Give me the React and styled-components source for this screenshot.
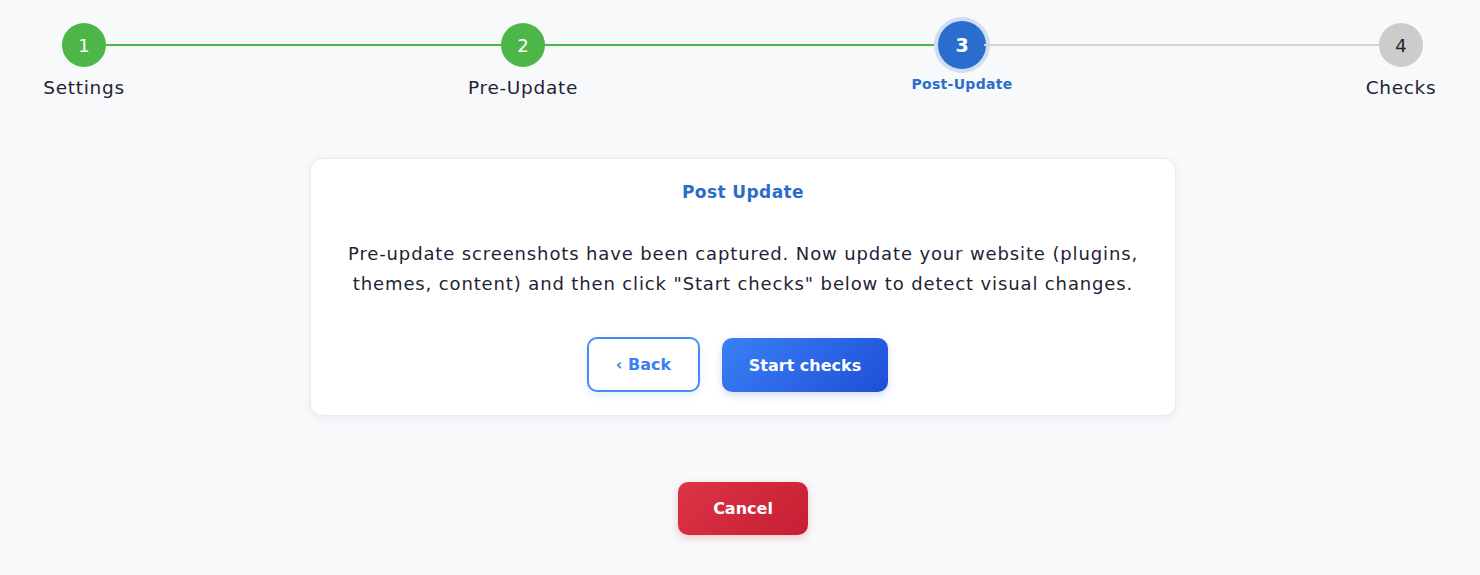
import React from "react";
import styled, { createGlobalStyle } from "styled-components";

const Global = createGlobalStyle`
  html, body { margin: 0; padding: 0; background: #f8f9fb; }
  body { font-family: "DejaVu Sans", "Noto Sans", sans-serif; color: #1f2335; }
  * { box-sizing: border-box; }
`;

const Page = styled.div`
  width: 1480px;
  min-height: 575px;
  display: flex;
  flex-direction: column;
`;

const Stepper = styled.div`
  width: 100%;
  display: flex;
  align-items: flex-start;
  padding: 23px 57px 0 62px;
  height: 158px;
`;

const Step = styled.div`
  width: 44px;
  display: flex;
  flex-direction: column;
  align-items: center;
`;

const Circle = styled.div`
  width: ${(p) => (p.$active ? 48 : 44)}px;
  height: ${(p) => (p.$active ? 48 : 44)}px;
  margin-top: ${(p) => (p.$active ? -2 : 0)}px;
  flex: none;
  border-radius: 50%;
  display: flex;
  align-items: center;
  justify-content: center;
  font-size: ${(p) => (p.$active ? 19 : 18)}px;
  font-weight: ${(p) => (p.$active ? 700 : 400)};
  color: ${(p) => (p.$state === "todo" ? "#1f2335" : "#fff")};
  background: ${(p) =>
    p.$state === "done" ? "#4cb648" : p.$state === "active" ? "#2b6dcc" : "#cccccc"};
  box-shadow: ${(p) => (p.$state === "active" ? "0 0 0 4px #d0def4" : "none")};
`;

const Label = styled.div`
  white-space: nowrap;
  margin-top: ${(p) => (p.$active ? 7 : 10)}px;
  font-size: ${(p) => (p.$active ? 14 : 18.5)}px;
  letter-spacing: ${(p) => (p.$active ? 0.3 : 0.7)}px;
  font-weight: ${(p) => (p.$active ? 700 : 400)};
  color: ${(p) => (p.$active ? "#2b6dcc" : "#1f2335")};
`;

const Connector = styled.div`
  flex: 1;
  height: 2px;
  margin-top: 21px;
  background: ${(p) => (p.$done ? "#4cb648" : "#d4d4d6")};
`;

const Content = styled.div`
  display: flex;
  flex-direction: column;
  align-items: center;
  padding-left: 6px;
`;

const Card = styled.div`
  width: 866px;
  background: #fff;
  border: 1px solid #e9ebef;
  border-radius: 12px;
  box-shadow: 0 2px 8px rgba(20, 30, 60, 0.06);
  padding: 20px 20px 23px;
  display: flex;
  flex-direction: column;
  align-items: center;
`;

const Title = styled.h2`
  margin: 0;
  font-size: 17px;
  letter-spacing: 0.4px;
  font-weight: 700;
  color: #2b6dcc;
  line-height: 26px;
`;

const Text = styled.p`
  margin: 34px 0 0;
  font-size: 18px;
  letter-spacing: 0.87px;
  line-height: 30px;
  text-align: center;
  white-space: nowrap;
  color: #1f2335;
`;

const Actions = styled.div`
  margin-top: 38px;
  margin-right: 11px;
  display: flex;
  gap: 22px;
`;

const Button = styled.button`
  font-family: inherit;
  font-size: 16px;
  font-weight: 700;
  height: 55px;
  padding: 0;
  border-radius: 10px;
  cursor: pointer;
`;

const OutlineButton = styled(Button)`
  width: 113px;
  background: #fff;
  color: #3b7ff0;
  border: 2px solid #4a8af4;
  box-shadow: 0 3px 8px rgba(59, 127, 240, 0.15);
`;

const PrimaryButton = styled(Button)`
  width: 166px;
  height: 54px;
  margin-top: 1px;
  color: #fff;
  border: none;
  background: linear-gradient(135deg, #3b80f6 0%, #1e4fd6 100%);
  box-shadow: 0 3px 8px rgba(30, 80, 214, 0.2);
`;

const CancelButton = styled(Button)`
  margin-top: 66px;
  width: 130px;
  height: 53px;
  color: #fff;
  border: none;
  background: linear-gradient(135deg, #dc3445 0%, #c61f33 100%);
  box-shadow: 0 3px 8px rgba(220, 52, 69, 0.25);
`;

const steps = [
  { n: 1, label: "Settings", state: "done" },
  { n: 2, label: "Pre-Update", state: "done" },
  { n: 3, label: "Post-Update", state: "active" },
  { n: 4, label: "Checks", state: "todo" },
];

export default function App() {
  return (
    <>
      <Global />
      <Page>
        <Stepper>
          {steps.map((s, i) => (
            <React.Fragment key={s.n}>
              {i > 0 && <Connector $done={steps[i].state !== "todo"} />}
              <Step>
                <Circle $state={s.state} $active={s.state === "active"}>
                  {s.n}
                </Circle>
                <Label $active={s.state === "active"}>{s.label}</Label>
              </Step>
            </React.Fragment>
          ))}
        </Stepper>
        <Content>
          <Card>
            <Title>Post Update</Title>
            <Text>
              Pre-update screenshots have been captured. Now update your website (plugins,
              <br />
              themes, content) and then click "Start checks" below to detect visual changes.
            </Text>
            <Actions>
              <OutlineButton>‹ Back</OutlineButton>
              <PrimaryButton>Start checks</PrimaryButton>
            </Actions>
          </Card>
          <CancelButton>Cancel</CancelButton>
        </Content>
      </Page>
    </>
  );
}
